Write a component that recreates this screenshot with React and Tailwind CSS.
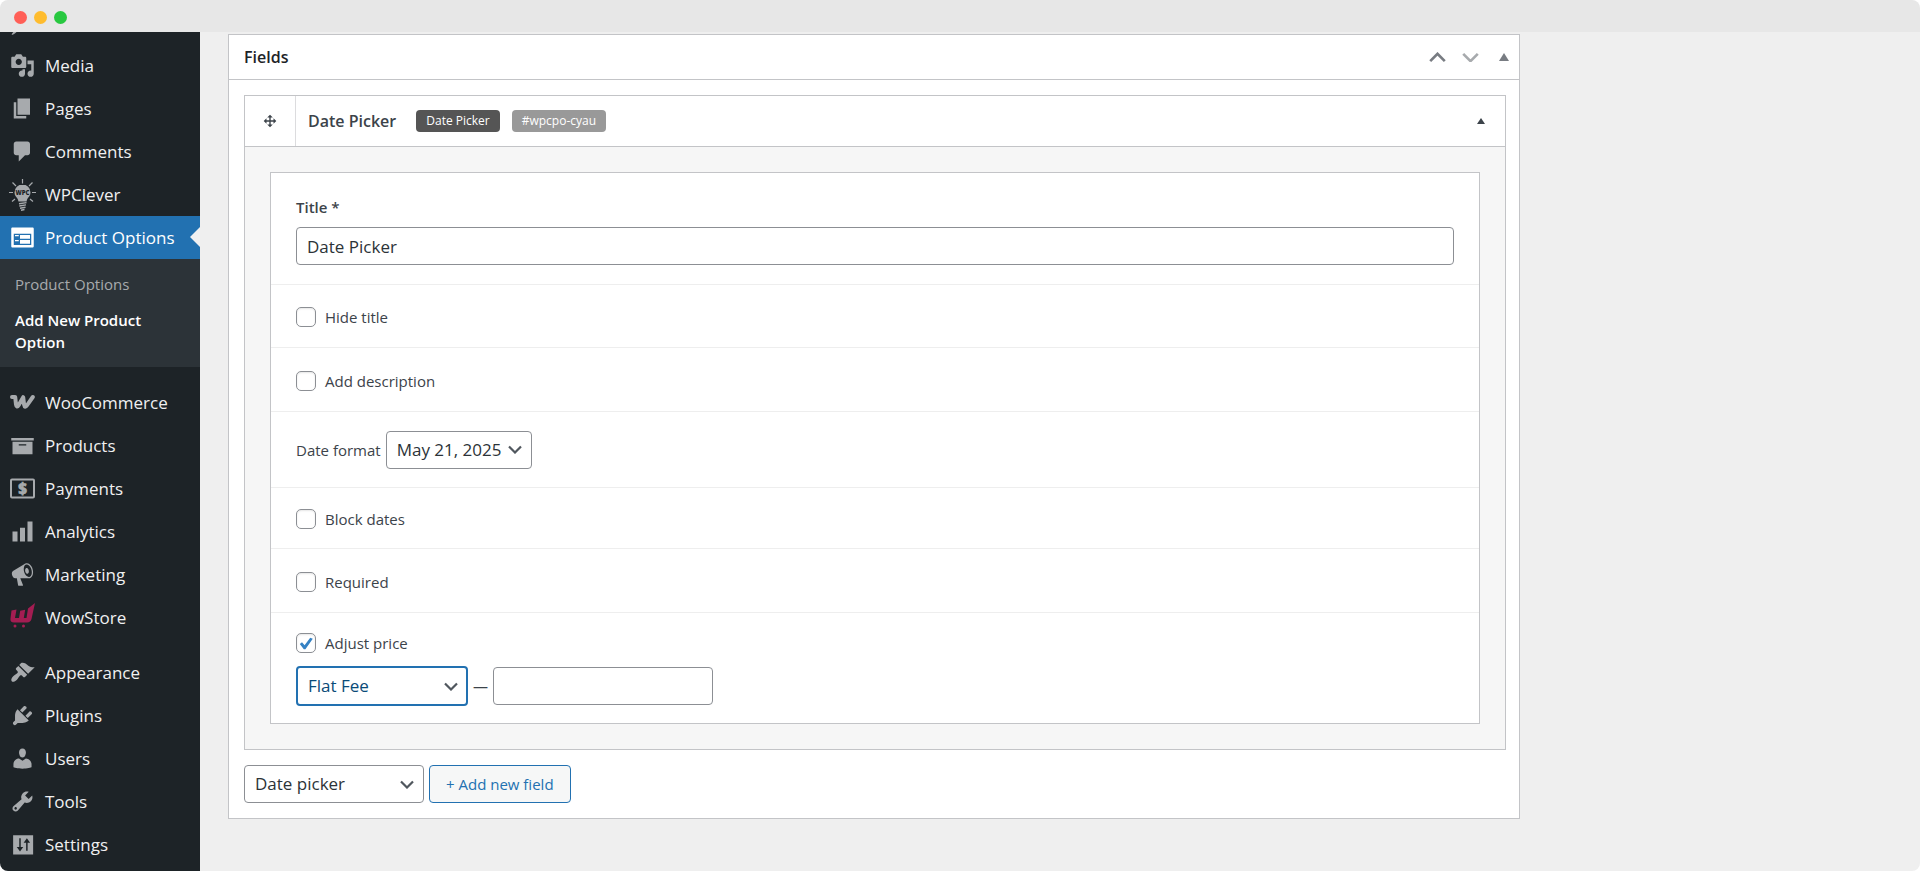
import React, { useState } from 'react';

const icons = {
  media:
    'M13 11V4c0-.55-.45-1-1-1h-1.67L9 1H5L3.67 3H2c-.55 0-1 .45-1 1v7c0 .55.45 1 1 1h10c.55 0 1-.45 1-1zM7 4.5c1.38 0 2.5 1.12 2.5 2.5S8.38 9.5 7 9.5 4.5 8.38 4.5 7 5.62 4.5 7 4.5zM14 6h5v10.5c0 1.38-1.12 2.5-2.5 2.5S14 17.88 14 16.5s1.12-2.5 2.5-2.5c.17 0 .34.02.5.05V9h-3V6zM10 14.05V13h2v3.5c0 1.38-1.12 2.5-2.5 2.5S7 17.88 7 16.5 8.12 14 9.5 14c.17 0 .34.02.5.05z',
  pages: 'M6 15V2h10v13H6zm-1 1h8v2H3V5h2v11z',
  comments: 'M5 2h9c1.1 0 2 .9 2 2v7c0 1.1-.9 2-2 2h-2l-5 5v-5H5c-1.1 0-2-.9-2-2V4c0-1.1.9-2 2-2z',
  feedback:
    'M2 2h16c.55 0 1 .45 1 1v14c0 .55-.45 1-1 1H2c-.55 0-1-.45-1-1V3c0-.55.45-1 1-1zm15 14V7H3v9h14zM4 8v1h3V8H4zm4 0v3h8V8H8zm-4 4v1h3v-1H4zm4 0v3h8v-3H8z',
  archive: 'M19 4v2H1V4h18zM2 7h16v10H2V7zm11 3V9H7v1h6z',
  chart: 'M18 18V2h-4v16h4zm-6 0V7H8v11h4zm-6 0v-8H2v8h4z',
  megaphone:
    'M18.15 5.94c.46 1.62.38 3.22-.02 4.48-.42 1.28-1.26 2.18-2.3 2.48-.16.06-.26.06-.4.06-.06.02-.12.02-.18.02-.06.02-.14.02-.22.02h-6.8l2.22 5.5c.02.14-.06.26-.14.34-.08.1-.24.16-.34.16H6.95c-.1 0-.26-.06-.34-.16-.08-.08-.16-.2-.14-.34l-1-5.5H4.25l-.02-.02c-.5.06-1.08-.18-1.54-.62s-.88-1.08-1.06-1.88c-.24-.8-.2-1.56-.02-2.2.18-.62.58-1.08 1.06-1.3l.02-.02 9-5.4c.1-.06.18-.1.24-.16.06-.04.14-.08.24-.12.16-.08.28-.12.5-.18 1.04-.3 2.24.1 3.22.98s1.84 2.24 2.26 3.86zm-2.58 5.98h-.02c.4-.1.74-.34 1.04-.7.58-.7.86-1.76.86-3.04 0-.64-.1-1.3-.28-1.98-.34-1.36-1.02-2.5-1.78-3.24s-1.68-1.1-2.46-.88c-.82.22-1.4.96-1.7 2-.32 1.04-.28 2.36.06 3.72.38 1.36 1 2.5 1.8 3.24.78.74 1.62 1.1 2.48.88zm-2.54-7.08c.22-.04.42-.02.62.04.38.16.76.48 1.02 1s.42 1.2.42 1.78c0 .3-.04.56-.12.8-.18.48-.44.84-.86.94-.34.1-.8-.06-1.14-.4s-.64-.86-.78-1.5c-.18-.62-.12-1.24.02-1.72s.48-.84.82-.94z',
  appearance:
    'M14.48 11.06L7.41 3.99l1.5-1.5c.5-.56 2.3-.47 3.51.32 1.21.8 1.43 1.28 2.91 2.1 1.18.64 2.45 1.26 4.45.85zm-.71.71L6.7 4.7 4.93 6.47c-.39.39-.39 1.02 0 1.41l1.06 1.06c.39.39.39 1.03 0 1.42-.6.6-1.43 1.11-2.21 1.69-.35.26-.7.53-1.01.84C1.43 14.23.4 16.08 1.4 17.07c.99 1 2.84-.03 4.18-1.36.31-.31.58-.66.85-1.02.57-.78 1.08-1.61 1.69-2.21.39-.39 1.02-.39 1.41 0l1.06 1.06c.39.39 1.02.39 1.41 0z',
  plugins:
    'M13.11 4.36L9.87 7.6 8 5.73l3.24-3.24c.35-.34 1.05-.2 1.56.32.52.51.66 1.21.31 1.55zm-8 1.77l.91-1.12 9.01 9.01-1.19.84c-.71.71-2.63 1.16-3.82 1.16H6.14L4.9 17.26c-.59.59-1.54.59-2.12 0-.59-.58-.59-1.53 0-2.12l1.24-1.24v-3.88c0-1.13.4-3.19 1.09-3.89zm7.26 3.97l3.24-3.24c.34-.35 1.04-.21 1.55.31.52.51.66 1.21.31 1.55l-3.24 3.25z',
  users:
    'M10 9.25c-2.27 0-2.73-3.44-2.73-3.44C7 4.02 7.82 2 9.97 2c2.16 0 2.98 2.02 2.71 3.81 0 0-.41 3.44-2.68 3.44zm0 2.57L12.72 10c2.39 0 4.52 2.33 4.52 4.53v2.49s-3.65 1.13-7.24 1.13c-3.65 0-7.24-1.13-7.24-1.13v-2.49c0-2.25 1.94-4.48 4.47-4.48z',
  tools:
    'M16.68 9.77c-1.34 1.34-3.3 1.67-4.95.99l-5.41 6.52c-.99.99-2.59.99-3.58 0s-.99-2.59 0-3.57l6.52-5.42c-.68-1.65-.35-3.61.99-4.95 1.28-1.28 3.12-1.62 4.72-1.06l-2.89 2.89 2.82 2.82 2.86-2.87c.53 1.58.18 3.39-1.08 4.65zM3.81 16.21c.4.39 1.04.39 1.43 0 .4-.4.4-1.04 0-1.43-.39-.4-1.03-.4-1.43 0-.39.39-.39 1.03 0 1.43z',
  settings:
    'M18.500 18V2.500h-16V18h16zM7.400 5h1.200v7h2L8 15.500 5.400 12h2V5zm5.500 10V8.500h-2L13.500 5l2.600 3.500h-2V15h-1.200z',
  pin: 'M10.44 3.02l1.82-1.82 6.36 6.35-1.83 1.82c-1.05-.68-2.48-.57-3.41.36l-.75.75c-.92.93-1.04 2.35-.35 3.41l-1.83 1.82-2.41-2.41-2.8 2.79c-.42.42-3.38 2.71-3.8 2.29s1.86-3.39 2.28-3.81l2.79-2.79L4.1 9.36l1.83-1.82c1.05.69 2.48.57 3.4-.36l.75-.75c.93-.92 1.05-2.35.36-3.41z',
  move: 'M19 10l-4 4v-3h-4v4h3l-4 4-4-4h3v-4H5v3l-4-4 4-4v3h4V5H6l4-4 4 4h-3v4h4V6z',
};

const Dashicon = ({ name, className = 'size-[25px]' }) => (
  <svg viewBox="0 0 20 20" className={`${className} shrink-0 fill-current`} aria-hidden="true">
    <path d={icons[name]} fillRule="evenodd" />
  </svg>
);

const BulbIcon = () => (
  <svg viewBox="0 0 27 32" className="-mx-px h-8 w-[27px] shrink-0" fill="none" stroke="currentColor" aria-hidden="true">
    <path strokeWidth="1.2" d="M13.5 0v4.500M0 13.500h4M23 13.500h4M3.500 3.500l3.500 3.500M23.500 3.500L20 7M3 22.500l3-2.500M24 22.500L21 20" />
    <path
      fill="currentColor"
      stroke="none"
      d="M13.500 5.500a8 8 0 0 0-8 8c0 3 1.700 4.500 2.900 6 .6.800.9 1.900 1 3h8.200c.1-1.100.4-2.200 1-3 1.200-1.500 2.900-3 2.900-6a8 8 0 0 0-8-8z"
    />
    <path strokeWidth="1.400" d="M10 24.800l7.500-1.200M10.300 27l6.700-1.100M11 29.200l5.500-1M12 31.200l3.500-.7" />
    <text x="13.500" y="16" textAnchor="middle" fontSize="6" fontWeight="800" fill="#1d2327" stroke="none">
      WPC
    </text>
  </svg>
);

const WooIcon = () => (
  <svg viewBox="0 0 25 25" className="size-[25px] shrink-0" fill="none" stroke="currentColor" aria-hidden="true">
    <path
      strokeWidth="4"
      strokeLinecap="round"
      strokeLinejoin="round"
      d="M2 7h3.200l.8 7.500c.3 2.500 1.500 2.700 2.600.8L13.200 7.200l.9 7.500c.4 2.600 1.600 2.600 2.800.8L22.800 7"
    />
  </svg>
);

const PaymentsIcon = () => (
  <svg viewBox="0 0 25 25" className="size-[25px] shrink-0" aria-hidden="true">
    <rect x="1" y="3.500" width="23" height="18" rx="1" fill="none" stroke="currentColor" strokeWidth="2" />
    <text
      x="12.500"
      y="17.800"
      textAnchor="middle"
      fontSize="15"
      fontWeight="800"
      fill="currentColor"
      stroke="currentColor"
      strokeWidth=".6"
    >
      $
    </text>
  </svg>
);

const WowStoreIcon = () => (
  <svg viewBox="0 0 25 25" className="size-[25px] shrink-0 overflow-visible fill-[#a31d52]" aria-hidden="true">
    <path d="M1.500 5.500l5-1L5 13h4l1.200-7.200 5-1L13.800 13h2.700L18 3.500 25-2l-3.500 16c-.6 2.300-2 3.500-4.500 3.500H4c-2.600 0-4-1.500-3.500-4z" />
    <circle cx="5" cy="21" r="1.500" />
    <circle cx="13.500" cy="21" r="1.500" />
  </svg>
);

const mainMenu = [
  { label: 'Media', icon: <Dashicon name="media" /> },
  { label: 'Pages', icon: <Dashicon name="pages" /> },
  { label: 'Comments', icon: <Dashicon name="comments" /> },
  { label: 'WPClever', icon: <BulbIcon /> },
];

const storeMenu = [
  { label: 'WooCommerce', icon: <WooIcon /> },
  { label: 'Products', icon: <Dashicon name="archive" /> },
  { label: 'Payments', icon: <PaymentsIcon /> },
  { label: 'Analytics', icon: <Dashicon name="chart" /> },
  { label: 'Marketing', icon: <Dashicon name="megaphone" /> },
  { label: 'WowStore', icon: <WowStoreIcon /> },
];

const siteMenu = [
  { label: 'Appearance', icon: <Dashicon name="appearance" /> },
  { label: 'Plugins', icon: <Dashicon name="plugins" /> },
  { label: 'Users', icon: <Dashicon name="users" /> },
  { label: 'Tools', icon: <Dashicon name="tools" /> },
  { label: 'Settings', icon: <Dashicon name="settings" /> },
];

const MenuItem = ({ icon, label }) => (
  <li>
    <a href="#" className="flex h-[43px] items-center gap-2.5 pl-2.5 text-[#f0f0f1]">
      <span className="flex text-[#a7aaad]">{icon}</span>
      {label}
    </a>
  </li>
);

const Sidebar = () => (
  <nav className="w-[200px] shrink-0 rounded-bl-lg bg-[#1d2327] text-[17px]">
    <div className="flex h-3 items-start overflow-hidden pl-2.5 text-[#a7aaad]">
      <Dashicon name="pin" className="-mt-5 size-[25px]" />
    </div>
    <ul>
      {mainMenu.map((item) => (
        <MenuItem key={item.label} {...item} />
      ))}
      <li>
        <a href="#" className="relative flex h-[43px] items-center gap-2.5 bg-[#2271b1] pl-2.5 text-white">
          <Dashicon name="feedback" />
          Product Options
          <span className="absolute top-[11px] right-0 border-y-10 border-r-10 border-y-transparent border-r-[#f0f0f1]"></span>
        </a>
        <ul className="bg-[#2c3338] px-[15px] pt-3.5 pb-3.5 text-[15px] leading-[22px]">
          <li>
            <a href="#" className="block text-[#a7aaad]">Product Options</a>
          </li>
          <li className="pt-3.5">
            <a href="#" className="block font-semibold text-white">Add New Product Option</a>
          </li>
        </ul>
      </li>
    </ul>
    <ul className="mt-3.5">
      {storeMenu.map((item) => (
        <MenuItem key={item.label} {...item} />
      ))}
    </ul>
    <ul className="mt-3">
      {siteMenu.map((item) => (
        <MenuItem key={item.label} {...item} />
      ))}
    </ul>
  </nav>
);

const Chevron = ({ className }) => (
  <svg viewBox="0 0 14 9" className={className} fill="none" stroke="currentColor" aria-hidden="true">
    <path strokeWidth="2.200" d="M1 1.500l6 6 6-6" />
  </svg>
);

const Select = ({ id, label, options, className }) => (
  <span className="relative inline-flex">
    <select
      id={id}
      aria-label={label}
      className={`appearance-none rounded bg-white pr-6 pl-2.5 text-[17px] outline-none ${className}`}
    >
      {options.map((option) => (
        <option key={option}>{option}</option>
      ))}
    </select>
    <span className="pointer-events-none absolute inset-y-0 right-2.5 flex items-center">
      <Chevron className="w-3.5 text-[#50575e]" />
    </span>
  </span>
);

const Checkbox = ({ id, label, defaultChecked = false }) => {
  const [checked, setChecked] = useState(defaultChecked);
  return (
    <div className="flex items-center gap-[9px]">
      <span className="relative flex">
        <input
          id={id}
          type="checkbox"
          checked={checked}
          onChange={(e) => setChecked(e.target.checked)}
          className="size-5 appearance-none rounded-[5px] border border-[#8c8f94] bg-white shadow-[inset_0_1px_2px_rgba(0,0,0,0.1)]"
        />
        {checked && (
          <svg viewBox="0 0 20 20" className="pointer-events-none absolute inset-0 size-5" aria-hidden="true">
            <path fill="#3582c4" d="M14.200 4.800l2.600 1L9.400 16.200H7.800L3.800 11l2.200-1.700 2.600 2.900z" />
          </svg>
        )}
      </span>
      <label htmlFor={id}>{label}</label>
    </div>
  );
};

const FieldForm = () => (
  <div className="border border-[#c3c4c7] bg-white text-[15px] leading-5 text-[#3c434a]">
    <div className="border-b border-[#eeeeee] px-[25px] pt-6 pb-[19px]">
      <label htmlFor="field-title" className="block font-semibold">Title *</label>
      <input
        id="field-title"
        type="text"
        defaultValue="Date Picker"
        className="mt-2.5 block h-[38px] w-full rounded border border-[#8c8f94] px-2.5 text-[17px] text-[#2c3338]"
      />
    </div>
    <div className="flex h-[63px] items-center border-b border-[#eeeeee] px-[25px] pt-0.5">
      <Checkbox id="hide-title" label="Hide title" />
    </div>
    <div className="flex h-16 items-center border-b border-[#eeeeee] px-[25px] pt-0.5">
      <Checkbox id="add-description" label="Add description" />
    </div>
    <div className="flex h-[76px] items-center gap-[5px] border-b border-[#eeeeee] px-[25px]">
      <label htmlFor="date-format">Date format</label>
      <Select
        id="date-format"
        options={['May 21, 2025', '2025-05-21', '05/21/2025']}
        className="h-[38px] w-[146px] border border-[#8c8f94] text-[#2c3338]"
      />
    </div>
    <div className="flex h-[61px] items-center border-b border-[#eeeeee] px-[25px] pt-0.5">
      <Checkbox id="block-dates" label="Block dates" />
    </div>
    <div className="flex h-16 items-center border-b border-[#eeeeee] px-[25px] pt-0.5">
      <Checkbox id="required" label="Required" />
    </div>
    <div className="px-[25px] pt-5 pb-[17px]">
      <Checkbox id="adjust-price" label="Adjust price" defaultChecked />
      <div className="mt-[13px] flex items-center gap-[5px]">
        <Select
          id="price-type"
          label="Price type"
          options={['Flat Fee', 'Quantity Based', 'Percentage']}
          className="h-10 w-[172px] border-2 border-[#2271b1] text-[#0a4b78]"
        />
        <span>—</span>
        <input
          type="text"
          aria-label="Price"
          className="h-[38px] w-[220px] rounded border border-[#8c8f94] px-2.5 text-[17px]"
        />
      </div>
    </div>
  </div>
);

const FieldsPanel = () => (
  <section className="border border-[#c3c4c7] bg-white">
    <header className="flex h-[45px] items-center border-b border-[#c3c4c7] pr-2.5 pl-[15px]">
      <h2 className="flex-1 text-base font-semibold text-[#1d2327]">Fields</h2>
      <div className="flex items-center text-[#787c82]">
        <button type="button" aria-label="Move up" className="mr-4">
          <Chevron className="w-[17px] rotate-180" />
        </button>
        <button type="button" aria-label="Move down" className="mr-5 text-[#a7aaad]">
          <Chevron className="w-[17px]" />
        </button>
        <button type="button" aria-label="Toggle panel">
          <svg viewBox="0 0 10 8" className="w-2.5 fill-current" aria-hidden="true">
            <path d="M5 0l5 8H0z" />
          </svg>
        </button>
      </div>
    </header>
    <div className="p-[15px] pr-[13px]">
      <div className="border border-[#c3c4c7]">
        <div className="flex h-[51px] items-center border-b border-[#c3c4c7] pr-5">
          <button
            type="button"
            aria-label="Drag field"
            className="flex w-[51px] items-center justify-center self-stretch border-r border-[#dcdcde] text-[#3c434a]"
          >
            <Dashicon name="move" className="size-3.5" />
          </button>
          <span className="pl-3 text-base font-semibold text-[#3c434a]">Date Picker</span>
          <span className="ml-5 rounded bg-[#555555] px-2.5 text-xs leading-[22px] text-white">Date Picker</span>
          <span className="ml-3 rounded bg-[#999999] px-2.5 text-xs leading-[22px] text-white">#wpcpo-cyau</span>
          <button type="button" aria-label="Toggle field" className="ml-auto text-[#3c434a]">
            <svg viewBox="0 0 8 6" className="w-2 fill-current" aria-hidden="true">
              <path d="M4 0l4 6H0z" />
            </svg>
          </button>
        </div>
        <div className="bg-[#f6f6f6] p-[25px]">
          <FieldForm />
        </div>
      </div>
      <div className="mt-[15px] flex gap-[5px]">
        <Select
          id="field-type"
          label="Field type"
          options={['Date picker', 'Text', 'Select']}
          className="h-[38px] w-[180px] border border-[#8c8f94] text-[#2c3338]"
        />
        <button
          type="button"
          className="h-[38px] rounded border border-[#2271b1] bg-[#f6f7f7] px-4 text-[15px] text-[#2271b1]"
        >
          + Add new field
        </button>
      </div>
    </div>
  </section>
);

const App = () => (
  <div className="flex min-h-screen flex-col bg-white font-['Open_Sans','Noto_Sans',sans-serif]">
    <div className="flex h-8 items-center gap-[7px] rounded-t-lg bg-[#e7e7e7] pt-0.5 pl-3.5">
      <span className="size-[13px] rounded-full bg-[#ff5f57]"></span>
      <span className="size-[13px] rounded-full bg-[#febc2e]"></span>
      <span className="size-[13px] rounded-full bg-[#28c840]"></span>
    </div>
    <div className="flex flex-1 rounded-b-lg bg-[#efefef]">
      <Sidebar />
      <main className="flex-1 pt-0.5 pr-[400px] pb-6 pl-7">
        <FieldsPanel />
      </main>
    </div>
  </div>
);

export default App;
